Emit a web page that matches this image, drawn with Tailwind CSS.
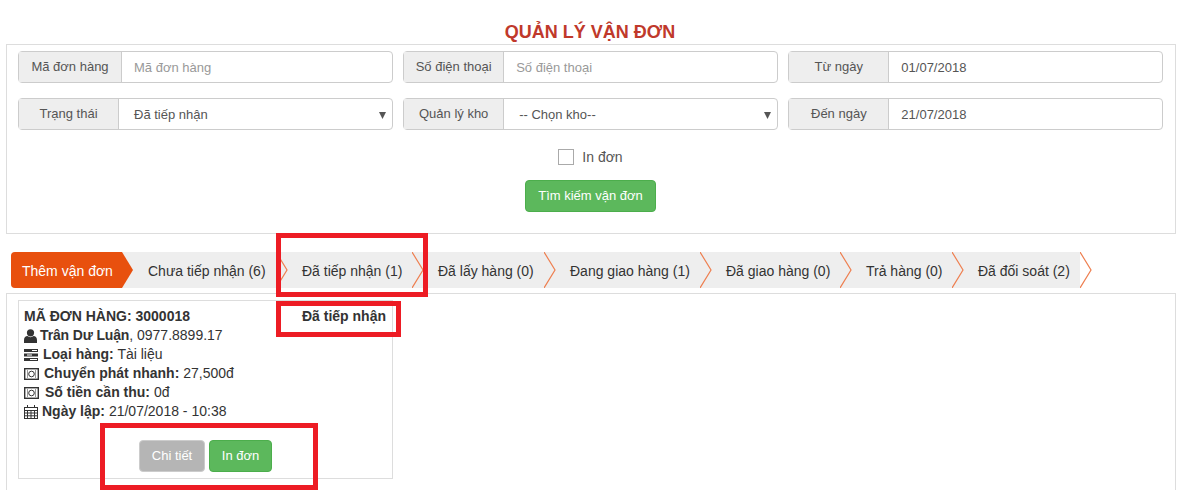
<!DOCTYPE html>
<html lang="en">
<head>
    <meta charset="UTF-8">
    <title>Quản lý vận đơn</title>
    <script src="https://cdn.jsdelivr.net/npm/@tailwindcss/browser@4"></script>
</head>
<body class="relative h-[490px] overflow-hidden bg-white font-['Liberation_Sans',Arial,sans-serif] text-[14px] leading-5 text-[#333]">

    <h1 class="h-[44px] pr-[4px] pt-[22px] text-center text-[18px] leading-5 font-bold text-[#c0392b]">QUẢN LÝ VẬN ĐƠN</h1>

    <!-- search form -->
    <div class="mx-[6px] h-[190px] w-[1170px] border border-[#ddd] pl-[11px] pr-[12px] pt-[6px] text-[13px]">
        <div class="grid grid-cols-3 gap-x-[10.5px] gap-y-[15px]">
            <div class="flex h-[32px] rounded border border-[#ccc]">
                <span class="flex w-[103px] items-center justify-center border-r border-[#ccc] bg-[#eee] text-[#555]">Mã đơn hàng</span>
                <span class="flex flex-1 items-center pl-3 pt-[2px] text-[#999]">Mã đơn hàng</span>
            </div>
            <div class="flex h-[32px] rounded border border-[#ccc]">
                <span class="flex w-[100px] items-center justify-center border-r border-[#ccc] bg-[#eee] text-[#555]">Số điện thoại</span>
                <span class="flex flex-1 items-center pl-3 pt-[2px] text-[#999]">Số điện thoại</span>
            </div>
            <div class="flex h-[32px] rounded border border-[#ccc]">
                <span class="flex w-[100px] items-center justify-center border-r border-[#ccc] bg-[#eee] text-[#555]">Từ ngày</span>
                <span class="flex flex-1 items-center pl-3 pt-[2px] text-[#555]">01/07/2018</span>
            </div>
            <div class="flex h-[32px] rounded border border-[#ccc]">
                <span class="flex w-[100px] items-center justify-center border-r border-[#ccc] bg-[#eee] text-[#555]">Trạng thái</span>
                <span class="flex flex-1 items-center justify-between pl-[15px] pr-[6px] pt-[2px] text-[#555]">Đã tiếp nhận
                    <svg width="7" height="7" viewBox="0 0 7 7"><path d="M0 0h7L3.500 7z" fill="#555"/></svg>
                </span>
            </div>
            <div class="flex h-[32px] rounded border border-[#ccc]">
                <span class="flex w-[100px] items-center justify-center border-r border-[#ccc] bg-[#eee] text-[#555]">Quản lý kho</span>
                <span class="flex flex-1 items-center justify-between pl-[15px] pr-[6px] pt-[2px] text-[#555]">-- Chọn kho--
                    <svg width="7" height="7" viewBox="0 0 7 7"><path d="M0 0h7L3.500 7z" fill="#555"/></svg>
                </span>
            </div>
            <div class="flex h-[32px] rounded border border-[#ccc]">
                <span class="flex w-[100px] items-center justify-center border-r border-[#ccc] bg-[#eee] text-[#555]">Đến ngày</span>
                <span class="flex flex-1 items-center pl-3 pt-[2px] text-[#555]">21/07/2018</span>
            </div>
        </div>
        <div class="mt-[19px] flex h-[16px] items-center justify-center gap-2 text-[14px]">
            <span class="h-4 w-4 border border-[#aaa]"></span>
            <span class="text-[#555]">In đơn</span>
        </div>
        <div class="mt-[15px] flex justify-center">
            <button class="h-[32px] w-[131px] rounded border border-[#4cae4c] bg-[#5cb85c] text-white">Tìm kiếm vận đơn</button>
        </div>
    </div>

    <!-- status tabs -->
    <div class="ml-[11px] mt-[18px] flex h-[36px] w-[1069px] rounded-l bg-[#eee] text-[#333]">
        <div class="relative flex w-[111px] items-center rounded-l bg-[#e8500e] pl-[11px] pt-[2px] text-white">Thêm vận đơn
            <svg class="absolute left-full top-0" width="11" height="36" viewBox="0 0 11 36"><path d="M0 0l11 18L0 36z" fill="#e8500e"/></svg>
        </div>
        <div class="relative flex w-[154px] items-center pl-[26px] pt-[2px]">Chưa tiếp nhận (6)
            <svg class="absolute left-full top-0" width="12" height="36" viewBox="0 0 12 36"><path d="M0 0l11 18L0 36" fill="none" stroke="#ee7f50" stroke-width="1.200"/></svg>
        </div>
        <div class="relative flex w-[136px] items-center pl-[26px] pt-[2px]">Đã tiếp nhận (1)
            <svg class="absolute left-full top-0" width="12" height="36" viewBox="0 0 12 36"><path d="M0 0l11 18L0 36" fill="none" stroke="#ee7f50" stroke-width="1.200"/></svg>
        </div>
        <div class="relative flex w-[132px] items-center pl-[26px] pt-[2px]">Đã lấy hàng (0)
            <svg class="absolute left-full top-0" width="12" height="36" viewBox="0 0 12 36"><path d="M0 0l11 18L0 36" fill="none" stroke="#ee7f50" stroke-width="1.200"/></svg>
        </div>
        <div class="relative flex w-[156px] items-center pl-[26px] pt-[2px]">Đang giao hàng (1)
            <svg class="absolute left-full top-0" width="12" height="36" viewBox="0 0 12 36"><path d="M0 0l11 18L0 36" fill="none" stroke="#ee7f50" stroke-width="1.200"/></svg>
        </div>
        <div class="relative flex w-[140px] items-center pl-[26px] pt-[2px]">Đã giao hàng (0)
            <svg class="absolute left-full top-0" width="12" height="36" viewBox="0 0 12 36"><path d="M0 0l11 18L0 36" fill="none" stroke="#ee7f50" stroke-width="1.200"/></svg>
        </div>
        <div class="relative flex w-[112px] items-center pl-[26px] pt-[2px]">Trả hàng (0)
            <svg class="absolute left-full top-0" width="12" height="36" viewBox="0 0 12 36"><path d="M0 0l11 18L0 36" fill="none" stroke="#ee7f50" stroke-width="1.200"/></svg>
        </div>
        <div class="relative flex w-[128px] items-center pl-[26px] pt-[2px]">Đã đối soát (2)
            <svg class="absolute left-full top-0" width="12" height="36" viewBox="0 0 12 36"><path d="M0 0l11 18L0 36" fill="none" stroke="#ee7f50" stroke-width="1.200"/></svg>
        </div>
    </div>

    <!-- orders -->
    <div class="mx-[6px] mt-[5px] h-[197px] w-[1170px] border border-b-0 border-[#ddd] pl-[11px] pt-[6px]">
        <div class="h-[179px] w-[375px] border border-[#ddd] pl-[5px] pt-[6px] leading-[19px]">
            <div class="flex justify-between pr-[6px]"><b>MÃ ĐƠN HÀNG: 3000018</b><b>Đã tiếp nhận</b></div>
            <div class="flex items-center gap-[3px]">
                <svg width="13" height="14" viewBox="0 0 13 14" fill="#333"><circle cx="6.500" cy="3.800" r="3.600"/><path d="M0 14v-3c0-2.600 1.600-3.800 3.400-4 1.800 1.500 4.400 1.500 6.200 0 1.800.2 3.400 1.400 3.400 4v3z"/></svg>
                <span><b class="tracking-[-0.15px]">Trân Dư Luận</b>, 0977.8899.17</span>
            </div>
            <div class="flex items-center gap-[5px]">
                <svg width="14" height="12" viewBox="0 0 14 12" fill="#333"><path d="M0 0h14v3H0z"/><path d="M0 4.500h14v3H0z"/><path d="M0 9h14v3H0z"/><path d="M8 1h5v1H8zM3 5.500h5v1H3zM6 10h7v1H6z" fill="#fff"/></svg>
                <span><b>Loại hàng:</b> Tài liệu</span>
            </div>
            <div class="flex items-center gap-[5px]">
                <svg width="15" height="12" viewBox="0 0 15 12" fill="none" stroke="#333"><rect x=".7" y=".7" width="13.600" height="10.600" stroke-width="1.400"/><circle cx="7.500" cy="6" r="2.800"/><path d="M3.500 2.500v7M11.500 2.500v7" stroke-dasharray="1 1"/></svg>
                <span><b>Chuyển phát nhanh:</b> 27,500đ</span>
            </div>
            <div class="flex items-center gap-[6px]">
                <svg width="15" height="12" viewBox="0 0 15 12" fill="none" stroke="#333"><rect x=".7" y=".7" width="13.600" height="10.600" stroke-width="1.400"/><circle cx="7.500" cy="6" r="2.800"/><path d="M3.500 2.500v7M11.500 2.500v7" stroke-dasharray="1 1"/></svg>
                <span><b>Số tiền cần thu:</b> 0đ</span>
            </div>
            <div class="flex items-center gap-[4px]">
                <svg width="14" height="14" viewBox="0 0 14 14" fill="none" stroke="#333"><rect x=".5" y="2.500" width="13" height="11"/><path d="M.5 5.500h13M.5 8h13M.5 10.800h13M3.500 5.500v8M7 5.500v8M10.500 5.500v8M3.500 0v3M10.500 0v3"/></svg>
                <span><b>Ngày lập:</b> 21/07/2018 - 10:38</span>
            </div>
            <div class="ml-[115px] mt-[19px] flex gap-1 text-[13px]">
                <button class="h-[32px] w-[66px] rounded border border-[#ccc] bg-[#b5b5b5] pb-[2px] text-white">Chi tiết</button>
                <button class="h-[32px] w-[63px] rounded border border-[#4cae4c] bg-[#5cb85c] pb-[2px] text-white">In đơn</button>
            </div>
        </div>
    </div>

    <!-- red annotation boxes drawn over the screenshot -->
    <div class="absolute left-[276px] top-[233px] h-[64px] w-[152px] border-[5px] border-[#ed1c24]"></div>
    <div class="absolute left-[276px] top-[301px] h-[36px] w-[125px] border-[5px] border-[#ed1c24]"></div>
    <div class="absolute left-[100px] top-[423px] h-[67px] w-[218px] border-[5px] border-[#ed1c24]"></div>
</body>
</html>
